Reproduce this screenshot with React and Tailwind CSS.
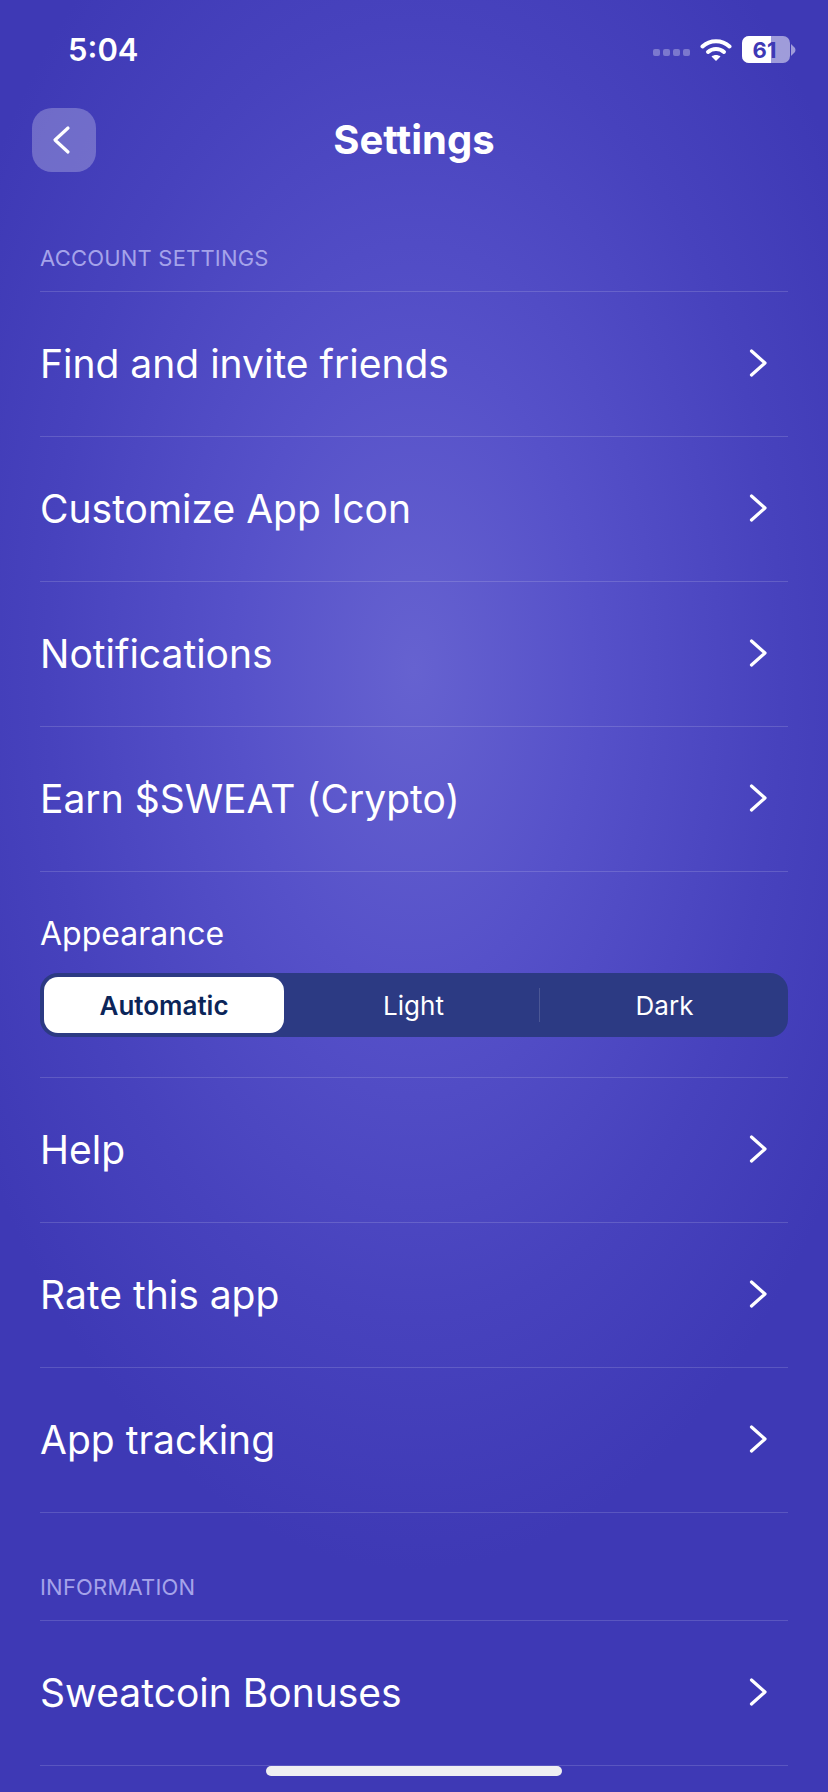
import React from "react";

const Chevron = () => (
  <svg width="20" height="30" viewBox="0 0 20 30" fill="none" className="shrink-0">
    <path d="M2.5 3 L16 15 L2.5 27" stroke="white" strokeWidth="3.2" strokeLinecap="round" strokeLinejoin="round" />
  </svg>
);

const Row = ({ label }) => (
  <div className="flex h-[145px] items-center justify-between border-b border-white/15 pb-[2px] pr-[19px]">
    <span className="text-[39px] leading-none text-white">{label}</span>
    <Chevron />
  </div>
);

const SectionLabel = ({ children, className }) => (
  <div className={`flex items-center border-b border-white/15 text-[22px] leading-none tracking-[0.2px] text-[#a5a3ea] ${className}`}>
    {children}
  </div>
);

export default function App() {
  return (
    <div
      className="relative h-[1792px] w-[828px] overflow-hidden bg-[#3e39b5] bg-[radial-gradient(ellipse_510px_900px_at_414px_670px,#6662d0_0%,#5651c9_35%,#4742bd_72%,#3e39b5_100%)]"
      style={{ fontFamily: '"Inter", "Liberation Sans", sans-serif' }}
    >
      {/* Status bar */}
      <div className="flex h-[108px] items-start justify-between pl-[68px] pr-[32px] pt-[30px]">
        <span className="text-[31px] font-semibold leading-[40px] text-white">5:04</span>
        <div className="flex items-center pt-[6px]">
          <div className="mr-[10px] mt-[6px] flex gap-[3px]">
            <span className="h-[7px] w-[7px] rounded-[2px] bg-white/30" />
            <span className="h-[7px] w-[7px] rounded-[2px] bg-white/30" />
            <span className="h-[7px] w-[7px] rounded-[2px] bg-white/30" />
            <span className="h-[7px] w-[7px] rounded-[2px] bg-white/30" />
          </div>
          <svg width="32" height="24" viewBox="0 0 32 24" className="mr-[10px]" fill="none">
            <path d="M2.5 8.5 C10 1.5 22 1.5 29.5 8.5" stroke="white" strokeWidth="4" strokeLinecap="round" />
            <path d="M8 14 C12.5 10 19.5 10 24 14" stroke="white" strokeWidth="4" strokeLinecap="round" />
            <path d="M16 23 L11.5 18.5 C14 16.5 18 16.5 20.5 18.5 Z" fill="white" />
          </svg>
          <div className="relative h-[27px] w-[48px] overflow-hidden rounded-[7px] bg-white/50">
            <div className="h-full w-[29px] bg-white" />
            <span className="absolute inset-0 flex items-center justify-center pr-[3px] text-[22px] font-bold leading-none text-[#3e39b5]">61</span>
          </div>
          <svg width="5" height="12" viewBox="0 0 5 12" className="ml-[1px]">
            <path d="M0 0 L4 4 Q5 6 4 8 L0 12 Z" fill="white" fillOpacity="0.5" />
          </svg>
        </div>
      </div>

      {/* Header */}
      <div className="relative flex h-[64px] items-center justify-center">
        <button className="absolute left-[32px] top-0 flex h-[64px] w-[64px] items-center justify-center rounded-[20px] bg-white/25 pr-[6px]">
          <svg width="20" height="30" viewBox="0 0 20 30" fill="none">
            <path d="M17 3 L4 15 L17 27" stroke="white" strokeWidth="3.2" strokeLinecap="round" strokeLinejoin="round" />
          </svg>
        </button>
        <h1 className="text-[40px] font-bold leading-none text-white">Settings</h1>
      </div>

      {/* List */}
      <div className="px-[40px]">
        <SectionLabel className="h-[120px] pt-[52px]">ACCOUNT SETTINGS</SectionLabel>
        <Row label="Find and invite friends" />
        <Row label="Customize App Icon" />
        <Row label="Notifications" />
        <Row label="Earn $SWEAT (Crypto)" />

        <div className="h-[206px] border-b border-white/15 pt-[44px]">
          <div className="text-[32px] leading-[36px] text-white">Appearance</div>
          <div className="mt-[21px] flex h-[64px] items-center rounded-[18px] bg-[#2c3a83] p-[4px]">
            <div className="flex h-[56px] w-[240px] items-center justify-center rounded-[14px] bg-white text-[26px] font-semibold text-[#0b2559]">
              Automatic
            </div>
            <div className="flex h-full w-[255px] items-center justify-center pl-[4px] text-[26px] text-white">Light</div>
            <div className="h-[34px] w-px bg-white/15" />
            <div className="flex h-full flex-1 items-center justify-center pl-[5px] text-[26px] text-white">Dark</div>
          </div>
        </div>

        <Row label="Help" />
        <Row label="Rate this app" />
        <Row label="App tracking" />

        <SectionLabel className="h-[108px] pt-[40px]">INFORMATION</SectionLabel>
        <Row label="Sweatcoin Bonuses" />
      </div>

      {/* Home indicator */}
      <div className="absolute left-[266px] top-[1766px] h-[10px] w-[296px] rounded-full bg-[#efeff2]" />
    </div>
  );
}
